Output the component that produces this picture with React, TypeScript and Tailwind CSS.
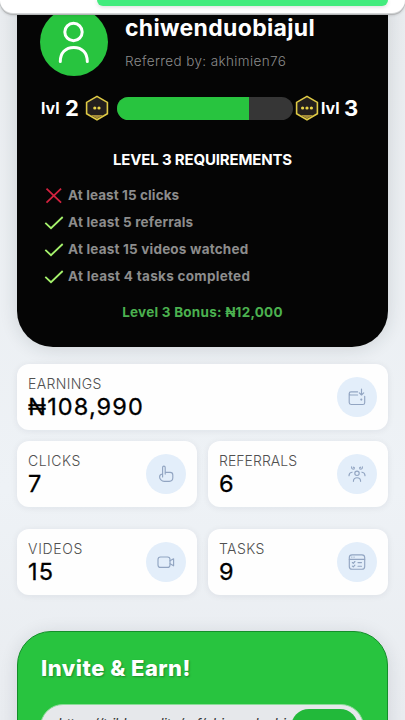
import React from "react";

type IconProps = { children: React.ReactNode };

function Glyph({ children }: IconProps) {
  return (
    <svg width="18" height="18" viewBox="0 0 18 18" fill="none" stroke="#92a5c2" strokeWidth="1.15" strokeLinecap="round" strokeLinejoin="round">
      {children}
    </svg>
  );
}

const WalletIcon = () => (
  <Glyph>
    <path d="M9.6 3.9H3A1.8 1.8 0 0 0 1.2 5.6v9A1.9 1.9 0 0 0 3.1 16.5h11.8a1.8 1.8 0 0 0 1.8-1.8V8.2M1.2 5.6A1.5 1.5 0 0 0 2.8 7h6.8" />
    <path d="M13.5 1v5.8M11.3 4.8l2.2 2.2 2.2-2.2" />
    <circle cx="13.3" cy="11.6" r=".5" fill="#92a5c2" />
  </Glyph>
);

const PointerIcon = () => (
  <Glyph>
    <path d="M5.6 12V2.4a1.3 1.3 0 0 1 2.6 0v4.9h5a2.6 2.6 0 0 1 2.6 2.6v2.9a3.5 3.5 0 0 1-3.5 3.5H7.2C4.6 16.3 2.6 14 2.6 11.9c0-1.6 1.1-2.8 3-2.9M8.2 7.3v1.8" />
  </Glyph>
);

const TeamIcon = () => (
  <Glyph>
    <circle cx="9" cy="8.3" r="2.2" />
    <path d="M5.4 16.3c0-2.2 1.5-3.6 3.6-3.6s3.6 1.4 3.6 3.6M1 10.7c0-2 1.1-3.3 3-3.5M17 10.7c0-2-1.1-3.3-3-3.5M3.6 1.8c-.3 1.9 1.2 2.9 2.8 2M14.4 1.8c.3 1.9-1.2 2.9-2.8 2M5.4 2.2l.9.4M12.6 2.2l-.9.4" />
  </Glyph>
);

const CameraIcon = () => (
  <Glyph>
    <rect x="1" y="4" width="12" height="10.4" rx="2.5" />
    <path d="M13 7.8l3.6-2v7l-3.6-2" />
  </Glyph>
);

const TaskIcon = () => (
  <Glyph>
    <rect x="1.3" y="1.8" width="15.4" height="14.4" rx="2.8" />
    <path d="M1.3 6.3h15.4M3.8 4.1h.1M6 4.1h.1M4.4 9.5l.9.8 1.6-1.8M4.4 13.1l.9.8 1.6-1.8M10 9.6h3.5M10 13.2h3.5" />
  </Glyph>
);

function Badge({ dots }: { dots: number[] }) {
  return (
    <svg width="24" height="26" viewBox="0 0 24 26" className="shrink-0">
      <path d="M12 1.4l10.4 6v11.4L12 24.8 1.6 18.8V7.4z" fill="#241f1d" stroke="#dfca45" strokeWidth="1.6" />
      <path d="M5.5 20h13l-6.5 3.5z" fill="#a48a38" />
      {dots.map((x) => (
        <circle key={x} cx={x} cy="13" r="1.6" fill="#ead447" />
      ))}
    </svg>
  );
}

function Requirement({ done, text, spacing }: { done: boolean; text: string; spacing: string }) {
  return (
    <li className="flex h-[27px] items-center">
      <svg width="20" height="20" viewBox="0 0 20 20" fill="none" strokeWidth="1.8" className="mr-[4px] ml-1 shrink-0">
        {done ? <path d="M1.3 9.8l5.7 5.4L18.7 4" stroke="#a5f26c" /> : <path d="M2.5 2.6l14.6 14M17.1 2.6l-14.6 14" stroke="#d3223f" />}
      </svg>
      <span className={`text-[13.5px] leading-none font-bold whitespace-nowrap text-[#8d8d8d] ${spacing}`}>{text}</span>
    </li>
  );
}

function Stat({
  label,
  value,
  icon,
  spacing,
  className = "",
}: {
  label: string;
  value: string;
  icon: React.ReactNode;
  spacing: string;
  className?: string;
}) {
  return (
    <section className={`flex h-[66px] items-center justify-between rounded-xl bg-[#fefefe] pr-[11px] pl-[11px] shadow-[0_1px_7px_rgba(20,35,50,0.07)] ${className}`}>
      <div className="pt-[2px]">
        <div className={`text-[14px] leading-[18px] font-light text-[#505050] ${spacing}`}>{label}</div>
        <div className="pb-px text-[23.5px] leading-[27px] font-normal tracking-[1.1px] text-black [-webkit-text-stroke:0.3px_black]">{value}</div>
      </div>
      <div className="mb-px flex size-10 items-center justify-center rounded-full bg-[#e3eefa]">{icon}</div>
    </section>
  );
}

export default function App() {
  return (
    <div className="relative h-[720px] w-[405px] overflow-hidden bg-[linear-gradient(180deg,#e9ecef_0%,#eef2f6_68%,#e9ecf0_100%)] font-[Inter,'Open_Sans',sans-serif]">
      <header className="absolute inset-x-0 top-0 z-10 h-[13px] rounded-b-[18px] bg-white pr-[17px] pl-[97px] shadow-[0_1px_0_#d3d5d6,0_2px_0_#b4b6b7,0_2px_3px_rgba(0,0,0,0.2)]">
        <div className="h-[6px] rounded-b-md bg-[#43ec7d] shadow-[0_1px_4px_rgba(0,0,0,0.15)]" />
      </header>

      <main className="flex flex-col pr-[17px] pl-[17px]">
        <section className="h-[347px] rounded-b-[36px] bg-[#050505] px-[23px] shadow-[0_2px_18px_rgba(30,40,50,0.14)]">
          <div className="flex h-[76px] items-end">
            <div className="flex size-[68px] shrink-0 items-center justify-center rounded-full bg-[#28c43f]">
              <svg width="34" height="44" viewBox="0 0 34 44" fill="none" stroke="white" strokeWidth="3">
                <circle cx="16.5" cy="12" r="8.7" />
                <path d="M3.3 41.5C3.3 33 8.4 27.4 16.8 27.4s13.5 5.6 13.5 14.1" strokeLinecap="round" />
              </svg>
            </div>
            <div className="ml-[17px] h-[60px]">
              <h1 className="text-[23px] leading-6 font-bold tracking-[0.32px] text-white">chiwenduobiajul</h1>
              <p className="pt-[11px] text-[13.5px] leading-5 font-light tracking-[0.38px] text-[#8b8b8b]">Referred by: akhimien76</p>
            </div>
          </div>

          <div className="mt-[19px] flex h-[26px] items-center text-white">
            <span className="w-[25px] pl-px text-[16px] font-bold">lvl</span>
            <span className="w-[20px] text-[22px] font-bold">2</span>
            <Badge dots={[9.8, 14]} />
            <div className="ml-[8px] h-[23px] w-[176px] overflow-hidden rounded-full bg-[#363636]">
              <div className="h-full w-[75%] bg-[#28c43f]" />
            </div>
            <div className="ml-[2px] flex items-center">
              <Badge dots={[7.6, 12, 16.4]} />
              <span className="w-[25px] pl-[2px] text-[16px] font-bold">lvl</span>
              <span className="text-[22px] font-bold">3</span>
            </div>
          </div>

          <h2 className="mt-[28px] h-[22px] text-center text-[15px] leading-[22px] font-bold tracking-[-0.17px] text-white">LEVEL 3 REQUIREMENTS</h2>
          <ul className="mt-[11px]">
            <Requirement done={false} text="At least 15 clicks" spacing="tracking-[0.1px]" />
            <Requirement done text="At least 5 referrals" spacing="tracking-[0.2px]" />
            <Requirement done text="At least 15 videos watched" spacing="tracking-[0.2px]" />
            <Requirement done text="At least 4 tasks completed" spacing="tracking-[0.29px]" />
          </ul>
          <p className="mt-[12px] text-center text-[13.5px] leading-5 font-bold tracking-[0.24px] text-[#4bb14f]">Level 3 Bonus: ₦12,000</p>
        </section>

        <div className="mt-[17px] grid grid-cols-2 gap-x-[11px]">
          <Stat label="EARNINGS" value="₦108,990" icon={<WalletIcon />} spacing="tracking-[0.35px]" className="col-span-2" />
          <Stat label="CLICKS" value="7" icon={<PointerIcon />} spacing="tracking-[0.5px]" className="mt-[11px]" />
          <Stat label="REFERRALS" value="6" icon={<TeamIcon />} spacing="tracking-[0.05px]" className="mt-[11px]" />
          <Stat label="VIDEOS" value="15" icon={<CameraIcon />} spacing="tracking-[0.7px]" className="mt-[22px]" />
          <Stat label="TASKS" value="9" icon={<TaskIcon />} spacing="tracking-[0.4px]" className="mt-[22px]" />
        </div>

        <section className="mt-[36px] h-[180px] rounded-t-[34px] border border-[#148e2a] bg-[#28c43f] px-[23px] pt-[23px] shadow-[0_2px_18px_rgba(30,40,50,0.12)]">
          <h2 className="h-[26px] text-[22px] leading-[26px] font-extrabold tracking-[0.48px] text-white [text-shadow:1px_1px_2px_rgba(0,0,0,0.3)]">Invite &amp; Earn!</h2>
          <div className="mt-[23px] -ml-px flex h-[46px] w-[324px] rounded-full border border-[#8bdc98] bg-[#e6e8eb] pt-[4px] pl-[17px]">
            <span className="w-[233px] pt-[5px] text-[14px] leading-5 tracking-[-0.35px] whitespace-nowrap text-[#333] italic">https://tribbonedita/ref/chiwenduobiajul</span>
            <div className="h-9 w-[67px] rounded-full bg-[#22b93a]" />
          </div>
        </section>
      </main>
    </div>
  );
}
